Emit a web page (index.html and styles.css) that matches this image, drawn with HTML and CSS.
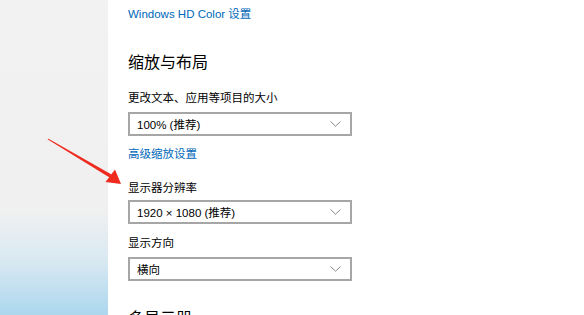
FILE: index.html
```html
<!DOCTYPE html>
<html lang="zh-CN">
<head>
    <meta charset="UTF-8">
    <title>显示设置</title>
    <link rel="stylesheet" href="styles.css">
</head>
<body>
    <div class="window">
        <aside class="nav"></aside>

        <main class="content">
            <a class="link" href="#">Windows HD Color 设置</a>

            <h2 class="section-title">缩放与布局</h2>

            <div class="label first">更改文本、应用等项目的大小</div>
            <div class="select">
                <span>100% (推荐)</span>
                <svg class="chevron" width="11" height="6" viewBox="0 0 11 6"><path d="M0.5 0.5 L5.5 5.2 L10.5 0.5" /></svg>
            </div>

            <a class="link sub" href="#">高级缩放设置</a>

            <div class="label res">显示器分辨率</div>
            <div class="select tight">
                <span>1920 × 1080 (推荐)</span>
                <svg class="chevron" width="11" height="6" viewBox="0 0 11 6"><path d="M0.5 0.5 L5.5 5.2 L10.5 0.5" /></svg>
            </div>

            <div class="label">显示方向</div>
            <div class="select">
                <span>横向</span>
                <svg class="chevron" width="11" height="6" viewBox="0 0 11 6"><path d="M0.5 0.5 L5.5 5.2 L10.5 0.5" /></svg>
            </div>

            <h2 class="section-title next">多显示器</h2>
        </main>

        <!-- red annotation arrow pointing at the resolution label -->
        <svg class="arrow" width="130" height="200" viewBox="0 0 130 200">
            <polygon points="47.5,139.3 48.5,138.7 111.5,174.5 109.5,177.5" />
            <polygon points="121,184 105.5,182 115,169.5" />
        </svg>
    </div>
</body>
</html>
```

FILE: styles.css
```css
body {
    margin: 0;
    background: #fff;
    font-family: "Liberation Sans", "Noto Sans CJK SC", sans-serif;
    color: #000;
}
.window {
    display: flex;
    height: 315px;
    position: relative;
    overflow: hidden;
}
.nav {
    width: 108px;
    flex-shrink: 0;
    background: linear-gradient(180deg, #f2f2f2 0px, #f0f0f0 210px, #d9e9f2 260px, #acd7ee 315px);
}
.content {
    flex: 1;
    padding: 6px 0 0 20px;
    display: flex;
    flex-direction: column;
    align-items: flex-start;
}
.content > * {
    flex-shrink: 0;
}
.link {
    color: #0067b8;
    text-decoration: none;
    font-size: 11.5px;
    line-height: 16px;
}
.link.sub {
    margin-top: 10px;
}
.section-title {
    font-size: 16px;
    font-weight: normal;
    line-height: 22px;
    margin: 30px 0 0;
}
.section-title.next {
    margin-top: 27px;
}
.label {
    font-size: 11.5px;
    line-height: 16px;
    margin-top: 11px;
}
.label.first {
    margin-top: 16px;
}
.label.res {
    margin-top: 18px;
}
.select {
    box-sizing: border-box;
    width: 224px;
    height: 24px;
    margin-top: 6px;
    border: 2px solid #a6a6a6;
    padding: 0 9px 0 7px;
    display: flex;
    align-items: center;
    justify-content: space-between;
    font-size: 11.5px;
}
.select.tight {
    margin-top: 4px;
}
.chevron path {
    fill: none;
    stroke: #8a8a8a;
    stroke-width: 1;
}
.arrow {
    position: absolute;
    left: 0;
    top: 0;
}
.arrow polygon {
    fill: #ef2a1e;
}
```
